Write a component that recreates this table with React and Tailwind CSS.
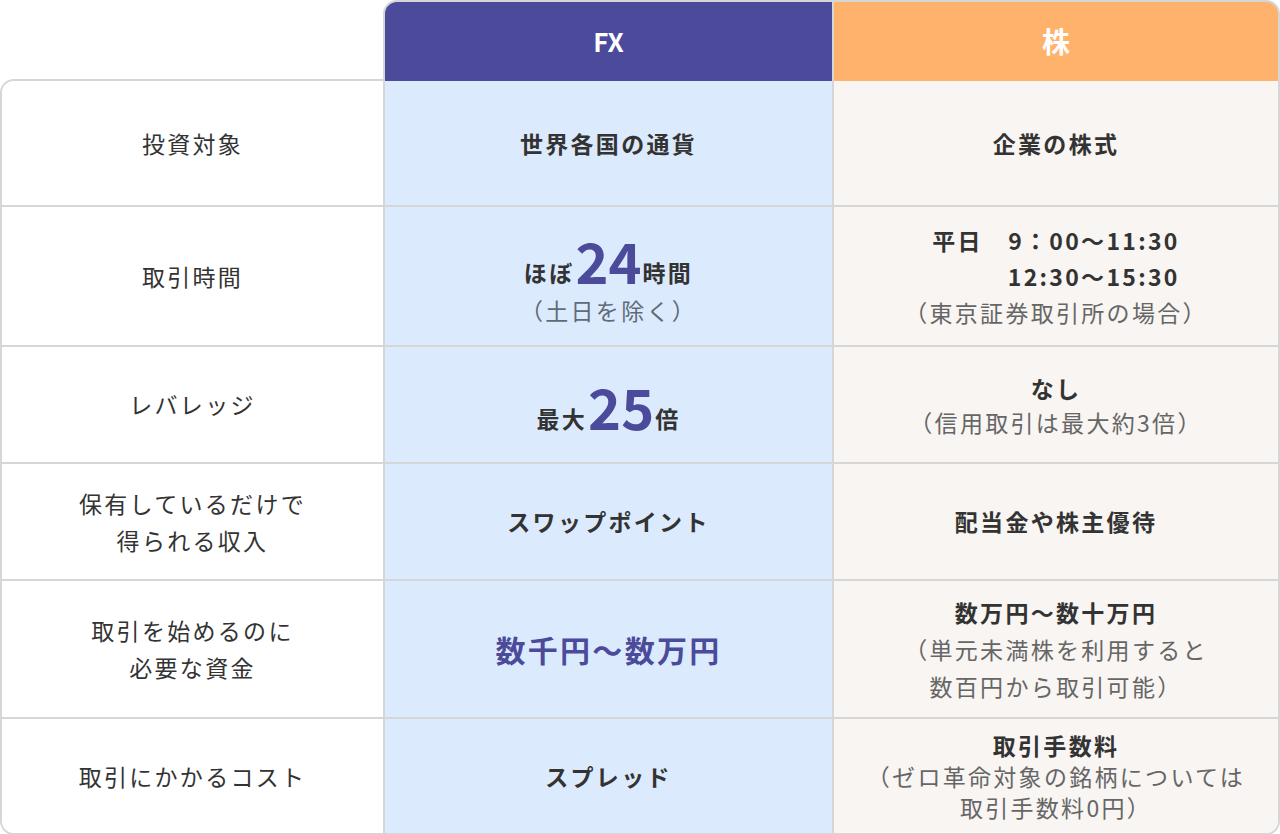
import React from 'react';

const font = { fontFamily: '"Noto Sans CJK JP", "Noto Sans", sans-serif' };

const rows = [
  {
    label: <>投資対象</>,
    h: 'h-[124px]',
    fx: <p className="font-bold text-[#333]">世界各国の通貨</p>,
    kabu: <p className="font-bold text-[#333]">企業の株式</p>,
  },
  {
    label: <>取引時間</>,
    h: 'h-[140px]',
    fx: (
      <div className="flex flex-col items-center pt-3">
        <p className="font-bold text-[#333] leading-none flex items-end">
          ほぼ
          <span className="text-[56px] leading-[48px] tracking-normal text-[#4b4a9b] mx-[1px]">24</span>
          時間
        </p>
        <p className="text-[#5f6b78] leading-[36px] mt-[8px]">（土日を除く）</p>
      </div>
    ),
    kabu: (
      <div className="flex flex-col items-center leading-[36px]">
        <div className="inline-block text-right font-bold text-[#333]">
          <p>平日　9：00〜11:30</p>
          <p>12:30〜15:30</p>
        </div>
        <p className="text-[#666]">（東京証券取引所の場合）</p>
      </div>
    ),
  },
  {
    label: <>レバレッジ</>,
    h: 'h-[117px]',
    fx: (
      <p className="font-bold text-[#333] flex items-end leading-none pt-[2px]">
        最大
        <span className="text-[56px] leading-[48px] tracking-normal text-[#4b4a9b] mx-[1px]">25</span>
        倍
      </p>
    ),
    kabu: (
      <div className="leading-[34px]">
        <p className="font-bold text-[#333]">なし</p>
        <p className="text-[#666]">（信用取引は最大約3倍）</p>
      </div>
    ),
  },
  {
    label: (
      <>
        保有しているだけで
        <br />
        得られる収入
      </>
    ),
    h: 'h-[117px]',
    fx: <p className="font-bold text-[#333]">スワップポイント</p>,
    kabu: <p className="font-bold text-[#333]">配当金や株主優待</p>,
  },
  {
    label: (
      <>
        取引を始めるのに
        <br />
        必要な資金
      </>
    ),
    h: 'h-[138px]',
    fx: <p className="font-bold text-[30px] text-[#4b4a9b]">数千円〜数万円</p>,
    kabu: (
      <div className="leading-[37px]">
        <p className="font-bold text-[#333]">数万円〜数十万円</p>
        <p className="text-[#666]">
          （単元未満株を利用すると
          <br />
          数百円から取引可能）
        </p>
      </div>
    ),
  },
  {
    label: <>取引にかかるコスト</>,
    h: 'h-[116px]',
    fx: <p className="font-bold text-[#333]">スプレッド</p>,
    kabu: (
      <div className="leading-[31px]">
        <p className="font-bold text-[#333]">取引手数料</p>
        <p className="text-[#666]">
          （ゼロ革命対象の銘柄については
          <br />
          取引手数料0円）
        </p>
      </div>
    ),
  },
];

export default function App() {
  return (
    <div className="w-[1280px] h-[834px] bg-white text-[23px] tracking-[0.1em]" style={font}>
      {/* Header */}
      <div className="flex h-[81px]">
        <div className="w-[383px]" />
        <div className="w-[449px] bg-[#4b4a9b] rounded-tl-[14px] border-2 border-b-0 border-r-0 border-[#d6d6d6] flex items-center justify-center pb-[2px]">
          <span className="text-white font-bold text-[26px] tracking-normal">FX</span>
        </div>
        <div className="flex-1 bg-[#ffb26b] rounded-tr-[14px] border-2 border-b-0 border-[#d6d6d6] flex items-center justify-center pb-[2px]">
          <span className="text-white font-bold text-[28px] tracking-normal">株</span>
        </div>
      </div>

      {/* Body */}
      <div className="border-2 border-[#d6d6d6] rounded-tl-[14px] rounded-b-[14px] overflow-hidden -mt-[2px]">
        {rows.map((r, i) => (
          <div
            key={i}
            className={`grid grid-cols-[381px_449px_1fr] ${r.h} ${i > 0 ? 'border-t-2 border-[#d6d6d6]' : ''}`}
          >
            <div className="bg-white flex items-center justify-center text-center text-[#333] leading-[37px]">
              <p>{r.label}</p>
            </div>
            <div className="bg-[#dceafd] border-l-2 border-[#d6d6d6] flex items-center justify-center text-center">
              {r.fx}
            </div>
            <div className="bg-[#f8f5f2] border-l-2 border-[#d6d6d6] flex items-center justify-center text-center">
              {r.kabu}
            </div>
          </div>
        ))}
      </div>
    </div>
  );
}
